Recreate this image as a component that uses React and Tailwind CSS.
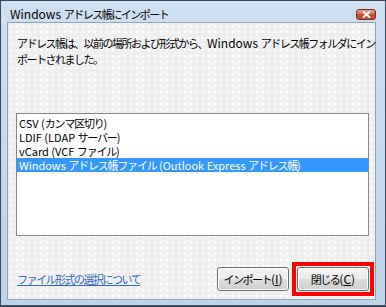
import React from "react";

const CJK = /([\u3000-\u30ff\u4e00-\u9fff\uff00-\uffef]+)/;

function J({ t, tight = "tracking-[-1.5px]" }) {
    return t.split(CJK).map((p, i) =>
        i % 2 === 1 ? (
            <span key={i} className={"text-[11px] " + tight}>{p}</span>
        ) : (
            p
        )
    );
}

function VistaButton({ label, accel }) {
    return (
        <button className="w-[72px] h-[24px] border border-[#707070] rounded-[3px] shadow-[inset_0_0_0_1px_#fbfbfb] bg-[linear-gradient(#f3f3f3_0%,#ebebeb_50%,#dddddd_50%,#cfcfcf_100%)] text-[12px] text-black leading-none flex items-center justify-center">
            <J t={label} />(<span className="underline">{accel}</span>)
        </button>
    );
}

export default function App() {
    const rows = [
        "CSV (カンマ区切り)",
        "LDIF (LDAP サーバー)",
        "vCard (VCF ファイル)",
        "Windows アドレス帳ファイル (Outlook Express アドレス帳)",
    ];

    return (
        <div className="w-[386px] h-[307px] flex flex-col border border-b-2 border-[#3a4a5c] bg-[linear-gradient(#cfe0f2,#bcd3ea)] font-['Noto_Sans_CJK_JP',sans-serif] text-[12px] text-black">
            {/* title bar */}
            <div className="h-[21px] flex items-start justify-between pl-[9px] pr-[9px] pt-[6px] shrink-0">
                <span className="leading-[14px] whitespace-nowrap">
                    <J t="Windows アドレス帳にインポート" />
                </span>
                <div className="mt-[2px] w-[20px] h-[11px] rounded-[3px] border border-[#7a2d1f] bg-[linear-gradient(#e8a493_0%,#d56a52_45%,#c0452c_55%,#c95a3c_100%)] flex items-center justify-center">
                    <svg width="9" height="7" viewBox="0 0 9 7">
                        <path d="M1 0.5 L8 6.5 M8 0.5 L1 6.5" stroke="#fff" strokeWidth="2" />
                    </svg>
                </div>
            </div>

            {/* body */}
            <div className="flex-1 flex pl-[6px] pr-[9px] pb-[5px]">
                <div className="flex-1 border border-[#8fa3b9] bg-[#f0f0f0] bg-[radial-gradient(circle,#ffffff_0.7px,transparent_0.9px)] bg-[length:6px_6px] pl-[8px] pt-[12px] flex flex-col">
                    <p className="leading-[16px] whitespace-nowrap pl-[1px]">
                        <J t="アドレス帳は、以前の場所および形式から、Windows アドレス帳フォルダにイン" />
                        <br />
                        <J t="ポートされました。" />
                    </p>

                    {/* format list */}
                    <div className="mt-[46px] w-[353px] h-[123px] border border-[#828790] bg-white pt-[2px] text-[11px]">
                        {rows.map((r, i) => (
                            <div
                                key={r}
                                className={
                                    i === 3
                                        ? "h-[14px] leading-[14px] pl-[2px] whitespace-nowrap bg-[#3399ff] text-white"
                                        : "h-[14px] leading-[14px] pl-[2px] whitespace-nowrap"
                                }
                            >
                                <J t={r} tight="tracking-[-1.2px]" />
                            </div>
                        ))}
                    </div>

                    {/* bottom row */}
                    <div className="mt-[26px] w-[358px] flex items-center justify-between">
                        <a className="ml-[1px] text-[#3366cc] underline whitespace-nowrap">
                            <J t="ファイル形式の選択について" />
                        </a>
                        <div className="flex items-center gap-[3px]">
                            <VistaButton label="インポート" accel="I" />
                            <div className="border-4 border-[#ff0000] p-[1px]">
                                <VistaButton label="閉じる" accel="C" />
                            </div>
                        </div>
                    </div>
                </div>
            </div>
        </div>
    );
}
